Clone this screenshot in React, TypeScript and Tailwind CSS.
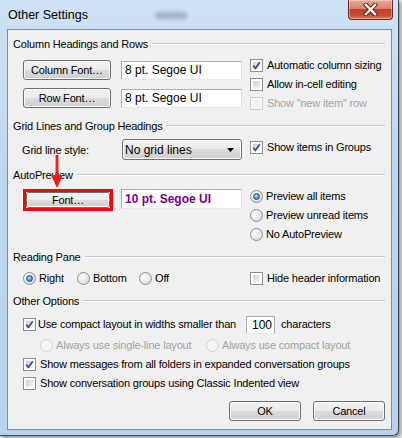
import React from "react";

const ui = "font-['Liberation_Sans',Arial,sans-serif] text-[11px] tracking-[-0.18px] text-black whitespace-nowrap";

function Check({ checked = false, disabled = false }: { checked?: boolean; disabled?: boolean }) {
    return (
        <span
            className={`relative flex h-[13px] w-[13px] shrink-0 items-center justify-center border ${
                disabled ? "border-[#cdcdcd] bg-[#f7f7f7]" : "border-[#8e8f8f] bg-white"
            }`}
        >
            <span
                className={`absolute inset-[2px] ${
                    disabled ? "bg-[#f0f0f0]" : "bg-linear-to-br from-[#cbcfd5] to-[#f7f7f7]"
                }`}
            />
            {checked && (
                <svg viewBox="0 0 11 11" className="relative h-[11px] w-[11px]">
                    <path d="M2.2 5.6 L4.4 8.3 L8.8 2.2" fill="none" stroke="#3b4f8c" strokeWidth="1.7" />
                </svg>
            )}
        </span>
    );
}

function Radio({ checked = false, disabled = false }: { checked?: boolean; disabled?: boolean }) {
    return (
        <span
            className={`relative flex h-[13px] w-[13px] shrink-0 items-center justify-center rounded-full border ${
                disabled
                    ? "border-[#d2d2d2] bg-[#f4f4f4]"
                    : "border-[#8e8f8f] bg-radial-[at_35%_35%] from-white to-[#cfd2d6]"
            }`}
        >
            {checked && (
                <span className="h-[7px] w-[7px] rounded-full border border-[#1d4d8f] bg-radial-[at_40%_35%] from-[#a9dcfb] to-[#1f5fae]" />
            )}
        </span>
    );
}

function CheckRow({ label, checked, disabled }: { label: string; checked?: boolean; disabled?: boolean }) {
    return (
        <div className="flex h-[19px] items-center gap-[4px]">
            <Check checked={checked} disabled={disabled} />
            <span className={disabled ? "text-[#a3a3a3]" : ""}>{label}</span>
        </div>
    );
}

function RadioRow({ label, checked, disabled }: { label: string; checked?: boolean; disabled?: boolean }) {
    return (
        <div className="flex h-[19px] items-center gap-[3px]">
            <Radio checked={checked} disabled={disabled} />
            <span className={disabled ? "text-[#a3a3a3]" : ""}>{label}</span>
        </div>
    );
}

function Btn({ children, className = "" }: { children: React.ReactNode; className?: string }) {
    return (
        <div
            className={`flex items-center justify-center rounded-[3px] border border-[#707070] bg-[linear-gradient(to_bottom,#f2f2f2_0%,#ebebeb_50%,#dddddd_50%,#cfcfcf_100%)] shadow-[inset_0_0_0_1px_#fbfbfb] ${className}`}
        >
            {children}
        </div>
    );
}

function TextBox({ children, className = "" }: { children: React.ReactNode; className?: string }) {
    return (
        <div
            className={`flex items-center border border-[#abadb3] border-b-[#e3e9ef] border-r-[#dbdfe6] bg-white pl-[3px] text-[12px] tracking-normal ${className}`}
        >
            {children}
        </div>
    );
}

function Heading({ title, className = "" }: { title: string; className?: string }) {
    return (
        <div className={`flex h-[14px] items-center ${className}`}>
            <span>{title}</span>
            <span className="ml-[4px] h-[2px] flex-1 border-t border-b border-t-[#c3c9ce] border-b-white" />
        </div>
    );
}

export default function App() {
    return (
        <div className="relative h-[438px] w-[402px] overflow-hidden bg-[#e4e8ec]">
            <div className="relative flex h-[436px] w-[399px] flex-col rounded-br-[6px] border-r border-b border-[#3e4a57] bg-[linear-gradient(to_bottom,#cfe2f4,#bdd6ef_40%,#b9d3ee)] pl-[7px] pr-[6px] shadow-[2px_2px_3px_rgba(0,0,0,0.35)]">
                {/* title bar */}
                <div className="flex h-[29px] items-start justify-between">
                    <span className="mt-[6px] pl-[1px] font-['Liberation_Sans',Arial,sans-serif] text-[12.5px] text-black">
                        Other Settings
                    </span>
                    <div className="mr-[-1px] flex h-[20px] w-[45px] items-center justify-center rounded-b-[4px] border border-t-0 border-[#6b2a22] bg-[linear-gradient(to_bottom,#eaa897_0%,#d9826e_45%,#c1402c_50%,#cc4b33_80%,#e07a56_100%)] shadow-[inset_0_0_0_1px_rgba(255,255,255,0.35)]">
                        <svg viewBox="0 0 16 14" className="h-[13px] w-[15px]">
                            <path
                                d="M3 2 L13 12 M13 2 L3 12"
                                stroke="#4b1e18"
                                strokeWidth="4.6"
                                strokeLinecap="square"
                            />
                            <path d="M3 2 L13 12 M13 2 L3 12" stroke="#ffffff" strokeWidth="2.6" strokeLinecap="square" />
                        </svg>
                    </div>
                </div>
                <span className="absolute left-[155px] top-[12px] h-[7px] w-[32px] rounded-full bg-[#8c9aa8] opacity-70 blur-[2px]" />

                {/* client area */}
                <div className={`flex h-[401px] flex-col border border-[#7c8ea3] bg-[#f0f0f0] pl-[5px] pr-[6px] ${ui}`}>
                    <Heading title="Column Headings and Rows" className="mt-[7px]" />
                    <div className="flex pl-[10px]">
                        <div className="flex flex-col gap-[8px] pt-[9px]">
                            <div className="flex items-center gap-[10px]">
                                <Btn className="h-[20px] w-[88px]">Column Font…</Btn>
                                <TextBox className="h-[19px] w-[121px]">8 pt. Segoe UI</TextBox>
                            </div>
                            <div className="flex items-center gap-[10px]">
                                <Btn className="h-[20px] w-[88px]">Row Font…</Btn>
                                <TextBox className="h-[19px] w-[121px]">8 pt. Segoe UI</TextBox>
                            </div>
                        </div>
                        <div className="ml-[8px] flex flex-col pt-[5px]">
                            <CheckRow checked label="Automatic column sizing" />
                            <CheckRow label="Allow in-cell editing" />
                            <CheckRow disabled label='Show "new item" row' />
                        </div>
                    </div>

                    <Heading title="Grid Lines and Group Headings" className="mt-[6px]" />
                    <div className="flex">
                        <div className="flex items-center pt-[6px]">
                            <span className="w-[109px] pl-[9px] pt-[2px]">Grid line style:</span>
                            <div className="flex h-[21px] w-[120px] items-center justify-between rounded-[3px] border border-[#707070] bg-[linear-gradient(to_bottom,#f2f2f2_0%,#ebebeb_50%,#dddddd_50%,#cfcfcf_100%)] pl-[2px] pr-[7px] shadow-[inset_0_0_0_1px_#fbfbfb] text-[12px] tracking-normal">
                                <span>No grid lines</span>
                                <svg viewBox="0 0 7 4" className="h-[4px] w-[7px]">
                                    <path d="M0 0 H7 L3.5 4 Z" fill="#000" />
                                </svg>
                            </div>
                        </div>
                        <div className="ml-[8px] pt-[5px]">
                            <CheckRow checked label="Show items in Groups" />
                        </div>
                    </div>

                    <Heading title="AutoPreview" className="mt-[8px]" />
                    <div className="flex pl-[10px]">
                        <div className="flex items-start gap-[8px] pt-[7px]">
                            <div className="flex h-[22px] w-[90px] border-[3px] border-[#ee0a0a]">
                                <Btn className="h-full w-full rounded-[1px]">Font…</Btn>
                            </div>
                            <TextBox className="h-[20px] w-[121px] font-bold text-[#800080]">10 pt. Segoe UI</TextBox>
                        </div>
                        <div className="ml-[8px] flex flex-col pt-[5px]">
                            <RadioRow checked label="Preview all items" />
                            <RadioRow label="Preview unread items" />
                            <RadioRow label="No AutoPreview" />
                        </div>
                    </div>

                    <Heading title="Reading Pane" className="mt-[6px]" />
                    <div className="flex pt-[5px] pl-[10px]">
                        <div className="w-[54px]">
                            <RadioRow checked label="Right" />
                        </div>
                        <div className="w-[62px]">
                            <RadioRow label="Bottom" />
                        </div>
                        <div className="w-[111px]">
                            <RadioRow label="Off" />
                        </div>
                        <CheckRow label="Hide header information" />
                    </div>

                    <Heading title="Other Options" className="mt-[6px]" />
                    <div className="mt-[7px] flex h-[19px] items-center pl-[10px]">
                        <Check checked />
                        <span className="ml-[2px] w-[208px]">Use compact layout in widths smaller than</span>
                        <div className="flex h-[18px] w-[29px] items-center border border-[#abadb3] border-b-[#e3e9ef] bg-white pl-[5px] text-[12px] tracking-normal">
                            100
                        </div>
                        <span className="ml-[6px]">characters</span>
                    </div>
                    <div className="mt-[2px] flex pl-[27px]">
                        <div className="w-[166px]">
                            <RadioRow disabled label="Always use single-line layout" />
                        </div>
                        <RadioRow disabled label="Always use compact layout" />
                    </div>
                    <div className="pl-[10px]">
                        <CheckRow checked label="Show messages from all folders in expanded conversation groups" />
                        <CheckRow label="Show conversation groups using Classic Indented view" />
                    </div>
                    <div className="mt-[8px] flex justify-end gap-[12px]">
                        <Btn className="h-[20px] w-[72px]">OK</Btn>
                        <Btn className="h-[20px] w-[72px]">Cancel</Btn>
                    </div>
                </div>

                {/* red arrow pointing at the Font button */}
                <svg viewBox="0 0 14 33" className="absolute left-[50px] top-[155px] h-[33px] w-[14px]">
                    <path d="M5.6 0 H8.4 V20 H13 L7 33 L1 20 H5.6 Z" fill="#ec1c1c" />
                </svg>
            </div>
        </div>
    );
}
